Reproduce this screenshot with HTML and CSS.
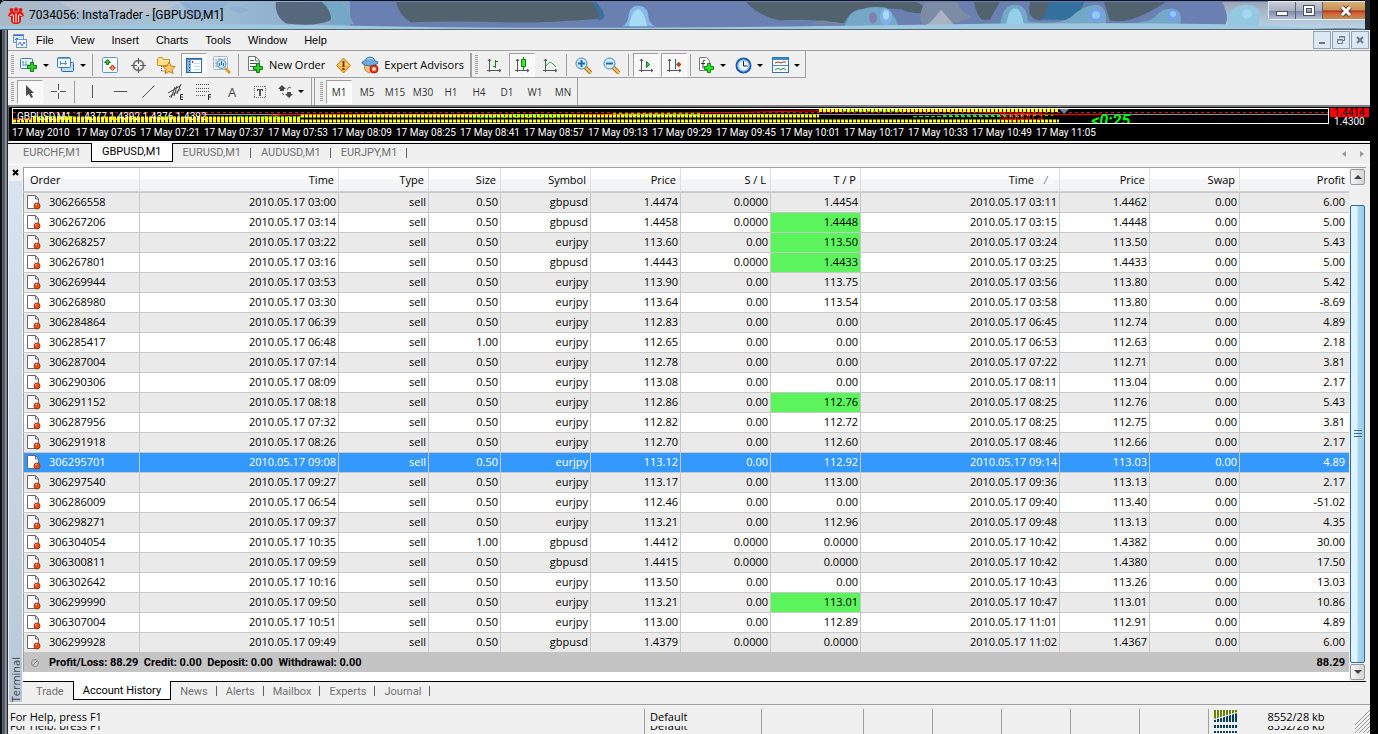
FILE: index.html
```html
<!DOCTYPE html>
<html lang="en">
<head>
    <meta charset="UTF-8">
    <meta name="viewport" content="width=device-width, initial-scale=1.0">
    <title>7034056: InstaTrader - [GBPUSD,M1]</title>
    <link rel="stylesheet" href="styles.css">
</head>
<body>

<div class="window">

    <!-- Title bar -->
    <header class="titlebar">
        <svg class="glass" viewBox="0 0 1365 30" preserveAspectRatio="none" aria-hidden="true">
            <defs>
                <linearGradient id="glass-left" x1="0" x2="1" y1="0" y2="0">
                    <stop offset="0" stop-color="#aab9c8"/><stop offset="0.55" stop-color="#a3c0d6"/><stop offset="1" stop-color="#7fa6c8"/>
                </linearGradient>
                <linearGradient id="glass-end" x1="0" x2="0" y1="0" y2="1">
                    <stop offset="0" stop-color="#9aa6ba"/><stop offset="1" stop-color="#bcd4e4"/>
                </linearGradient>
            </defs>
            <rect width="1365" height="30" fill="#6a80b0"/>
            <rect width="350" height="30" fill="url(#glass-left)"/>
            <path d="M60 1h120l-20 12-30 5-25-9-30 2z" fill="#b9c3d0"/>
            <path d="M228 7q12-3 22 3l-10 4zM180 1h50l-15 14-20 5z" fill="#8fb0d2"/>
            <path d="M276 1h46q14 11 8 20-14 7-44 3-12-9-10-23z" fill="#55687c"/>
            <path d="M322 1h20l12 24h-24q4-12-8-24z" fill="#74a8c6"/>
            <path d="M396 1h198q8 12 5 18-60 5-90 4-60-2-98 0-12-8-15-22z" fill="#53626f"/>
            <path d="M592 1h4q10 11 8 18l-6 2q3-8-6-20z" fill="#3a70a0"/>
            <path d="M746 1h170q12 5 6 12-14 0-20-4-22-2-44 0-10 4-14 15-40-6-64-3-20-4-34-20z" fill="#53626f"/>
            <path d="M812 25q4-5 12-4 14 4 24 2v2z" fill="#7488a0"/>
            <path d="M925 1h32q4 12 16 16l-20 8h-30q-6-8 2-24z" fill="#7c8ca4"/>
            <path d="M925 27q8-6 16-18 8 10 14 18z" fill="#a9b2c4"/>
            <path d="M845 27q4-17 16-18 10-4 24-2 8 4 14 20z" fill="#74a8c6"/>
            <ellipse cx="873" cy="18" rx="4" ry="6" fill="#8080b0"/>
            <ellipse cx="886" cy="17" rx="6" ry="9" fill="#86b0f0"/>
            <ellipse cx="886" cy="15" rx="3" ry="5" fill="#a8dcf0"/>
            <path d="M622 27q6-2 7-14 2-8 9-8 8 0 10 8 0 12 8 14z" fill="#86b8ea"/>
            <path d="M629 27q3-18 9-18t9 18z" fill="#a8dcf4"/>
            <path d="M974 1h26q-8 14-10 19h-8q-6-6-8-19z" fill="#53626f"/>
            <path d="M1030 1h54q-2 12-18 19h-30z" fill="#34709c"/>
            <path d="M1030 1h18q0 12-8 20-14-2-10-20zM1104 1h62q-20 14-36 19-12 3-20 1z" fill="#53626f"/>
            <path d="M1000 27q2-23 15-23 12 0 13 18 30 4 42-4 12-13 26-14 12 2 10 20 40 2 50-8 6-8 16-8 12 2 8 18z" fill="#72a8c8"/>
            <path d="M1006 28q2-20 9-20t9 20z" fill="#96d0e8"/>
            <circle cx="1096" cy="15" r="7" fill="#7c9ef0"/><circle cx="1096" cy="15" r="4" fill="#8acff0"/>
            <circle cx="1173" cy="15" r="6" fill="#7c9ef0"/><circle cx="1173" cy="14" r="3" fill="#8acff0"/>
            <path d="M1222 1h46v28h-46q10-8 0-28z" fill="url(#glass-end)"/>
            <path d="M1228 28q-3-24 19-24 20 2 12 24z" fill="#94c8e0"/>
            <circle cx="1247" cy="14" r="5" fill="#a4d8f0"/>
            <path d="M1259 1h106v28h-106z" fill="url(#glass-end)"/>
            <path d="M0 27q180-4 380 0t500-1 400 1 85-1v4h-1365z" fill="#a0c8e0"/>
        </svg>
        <svg class="app-logo" width="16" height="17" viewBox="0 0 16 17" aria-hidden="true">
            <path d="M1 6l3-2 4 1 4-1 3 2 1 3-3 1v5l-3 2H6l-3-2v-5L0 9z" fill="#e8180c"/>
            <path d="M8 6v10M5.500 8v7M10.500 8v7M2 8.500l3-1M14 8.500l-3-1" stroke="#fff" stroke-width="1" fill="none"/>
            <circle cx="8" cy="2.500" r="2" fill="#e8180c"/><circle cx="3.500" cy="3" r="2" fill="#e8180c"/><circle cx="12.500" cy="3" r="2" fill="#e8180c"/>
        </svg>
        <h1 class="caption">7034056: InstaTrader - [GBPUSD,M1]</h1>
        <div class="window-buttons">
            <button type="button" class="win-btn" aria-label="Minimize"><svg width="12" height="12" viewBox="0 0 12 12"><rect x="0.500" y="6.500" width="11" height="4" fill="#fff" stroke="#4a5260"/></svg></button>
            <button type="button" class="win-btn" aria-label="Maximize"><svg width="12" height="12" viewBox="0 0 12 12"><rect x="2" y="2" width="8" height="7" fill="none" stroke="#4a5260" stroke-width="4"/><rect x="2" y="2" width="8" height="7" fill="none" stroke="#fff" stroke-width="2"/></svg></button>
            <button type="button" class="win-btn win-close" aria-label="Close"><svg width="12" height="12" viewBox="0 0 12 12"><path d="M2 2l8 8M10 2l-8 8" stroke="#5a4040" stroke-width="5"/><path d="M2 2l8 8M10 2l-8 8" stroke="#fff" stroke-width="3"/></svg></button>
        </div>
    </header>

    <div class="client">

        <!-- Menu -->
        <nav class="menubar">
            <svg class="menu-icon" width="15" height="15" viewBox="0 0 15 15" aria-hidden="true">
                <rect x="1.500" y="1.500" width="10" height="8" fill="#dce8fa" stroke="#6c94dc"/><path d="M2 2.500h9" stroke="#3c6cd0"/>
                <rect x="4.500" y="6.500" width="10" height="8" fill="#fff" stroke="#6c94dc"/><path d="M6 12l2-3 2 4 2-4 1 2" stroke="#3c6cd0" fill="none"/>
                <path d="M3 7l2-2 1 1" stroke="#3c6cd0" fill="none"/>
            </svg>
            <button type="button" class="menu-item">File</button>
            <button type="button" class="menu-item">View</button>
            <button type="button" class="menu-item">Insert</button>
            <button type="button" class="menu-item">Charts</button>
            <button type="button" class="menu-item">Tools</button>
            <button type="button" class="menu-item">Window</button>
            <button type="button" class="menu-item">Help</button>
            <div class="mdi-buttons">
                <button type="button" class="mdi-btn" aria-label="Minimize chart"><svg width="10" height="10" viewBox="0 0 10 10"><path d="M2 8h6" stroke="#6a7a8c" stroke-width="2"/></svg></button>
                <button type="button" class="mdi-btn" aria-label="Restore chart"><svg width="10" height="10" viewBox="0 0 10 10"><path d="M1.500 4.500h5v4h-5zM3.500 3V1.500h5v4H7M1 5h6M3 2h6" stroke="#6a7a8c" fill="none"/></svg></button>
                <button type="button" class="mdi-btn" aria-label="Close chart"><svg width="10" height="10" viewBox="0 0 10 10"><path d="M2 2l6 6M8 2l-6 6" stroke="#6a7a8c" stroke-width="2"/></svg></button>
            </div>
        </nav>

        <!-- Standard toolbar -->
        <div class="toolbar toolbar-main">
            <i class="grip"></i>
            <button type="button" class="tool drop" aria-label="New chart"><svg width="18" height="16" viewBox="0 0 18 16"><rect x="0.500" y="1.500" width="12" height="10" rx="1" fill="#eaf4fc" stroke="#3c7cb4"/><path d="M3 4v5M2 5h2M3 8h6M6 4v5" stroke="#6c9cc4" fill="none"/><path d="M10.500 5.500h3v3h3v3h-3v3h-3v-3h-3v-3h3z" fill="#2cd42c" stroke="#0a7c0a"/></svg></button>
            <button type="button" class="tool drop" aria-label="Profiles"><svg width="18" height="16" viewBox="0 0 18 16"><rect x="4.500" y="5.500" width="12" height="9" rx="1" fill="#c4dcf0" stroke="#2c6cac"/><rect x="0.500" y="0.500" width="13" height="10" rx="1" fill="#eef6fc" stroke="#3c7cb4"/><path d="M1 1.500h12" stroke="#6cacdc"/><path d="M3.500 4v4M3 6.500h7M8.500 4v4" stroke="#5c8cb4" fill="none"/></svg></button>
            <i class="sep"></i>
            <button type="button" class="tool" aria-label="Market Watch"><svg width="16" height="16" viewBox="0 0 16 16"><rect x="0.500" y="0.500" width="15" height="15" rx="1" fill="#fafdff" stroke="#5c9cc4"/><path d="M5.500 2.500l3 3h-2v2h-2v-2h-2z" fill="#3cc43c" stroke="#0c7c1c"/><path d="M10.500 13.500l-3-3h2v-2h2v2h2z" fill="#fc9c6c" stroke="#d43c0c"/></svg></button>
            <button type="button" class="tool" aria-label="Data Window"><svg width="17" height="17" viewBox="0 0 17 17"><circle cx="8.500" cy="8.500" r="5" fill="none" stroke="#7c7c7c" stroke-width="2"/><path d="M8.500 1v6M8.500 10v6M1 8.500h6M10 8.500h6" stroke="#5c5c5c"/></svg></button>
            <button type="button" class="tool" aria-label="Navigator"><svg width="19" height="18" viewBox="0 0 19 18"><path d="M0.500 2.500l1-1h4l1 2h6v6h-12z" fill="#fce08c" stroke="#c89430"/><path d="M4.500 10v5h4" stroke="#444" stroke-dasharray="1 1" fill="none"/><path d="M12 6l2 4 4 .500-3 3 1 4-4-2-4 2 1-4-3-3 4-.500z" fill="#fccc5c" stroke="#c8701c"/></svg></button>
            <button type="button" class="tool active" aria-label="Terminal"><svg width="16" height="15" viewBox="0 0 16 15"><rect x="0.500" y="0.500" width="15" height="14" fill="#fcfeff" stroke="#2c64a4"/><path d="M1 1.500h14" stroke="#4c8ccc"/><path d="M1 2h4v12H1z" fill="#7cb4e8"/><path d="M3.500 3v10" stroke="#14406c" stroke-dasharray="1 2"/><path d="M6 4h1" stroke="#d00" stroke-width="2"/><path d="M8 5.500h6M8 8.500h6M8 11.500h6" stroke="#c4d8ec"/></svg></button>
            <button type="button" class="tool" aria-label="Strategy Tester"><svg width="18" height="18" viewBox="0 0 18 18"><rect x="0.500" y="0.500" width="14" height="13" rx="1" fill="#f4f8fc" stroke="#a4b8c8"/><path d="M3 3v9M6 2v5M12 2v5" stroke="#6c8ca4" stroke-dasharray="2 1"/><circle cx="8.500" cy="8" r="4.500" fill="#bce0f8" stroke="#5c8cb4"/><path d="M6.500 10V7M8.500 9V5M10.500 10V7" stroke="#2c6c9c"/><path d="M12 12l5 5" stroke="#d89c3c" stroke-width="3"/></svg></button>
            <i class="sep"></i>
            <button type="button" class="tool labelled new-order"><svg width="17" height="18" viewBox="0 0 17 18"><path d="M1.500 0.500h7l4 4v10h-11z" fill="#fff" stroke="#6c7c74"/><path d="M8.500 1v4h4" stroke="#6c7c74" fill="none"/><path d="M3 4.500h4M3 7.500h7M3 10.500h5" stroke="#3c5c4c"/><path d="M9.500 7.500h3v3h3v3h-3v3h-3v-3h-3v-3h3z" fill="#2cd42c" stroke="#0a7c0a"/></svg><span>New Order</span></button>
            <button type="button" class="tool" aria-label="MetaEditor"><svg width="17" height="17" viewBox="0 0 17 17"><path d="M8.500 1l7 7.500-7 7.500-7-7.500z" fill="#f8b444" stroke="#c87c1c" stroke-linejoin="round"/><path d="M8.500 3l5 5.500h-10z" fill="#fcd88c"/><path d="M8.500 4v6M8.500 11v2" stroke="#6c3c0c" stroke-width="2"/></svg></button>
            <button type="button" class="tool labelled"><svg width="18" height="18" viewBox="0 0 18 18"><path d="M3 8h11l-1 6-5 3-4-3z" fill="#f4c07c" stroke="#c08440"/><path d="M1 7q0-2 3-2 1-4 5-4t5 4q3 0 3 2-3 3-8 3T1 7z" fill="#6cacdc" stroke="#3474ac"/><path d="M6 3q3-1 6 0" stroke="#c4e4f8" fill="none"/><circle cx="13" cy="13" r="4" fill="#e83c1c" stroke="#a8200c"/><rect x="11.500" y="11.500" width="3" height="3" fill="#fff"/></svg><span>Expert Advisors</span></button>
            <i class="sep sep-bar"></i>
            <i class="grip"></i>
            <button type="button" class="tool" aria-label="Bar chart"><svg width="16" height="16" viewBox="0 0 16 16"><path d="M3.500 15V2M1 13.500h14M2 4l1.500-2L5 4M13 12l2 1.500-2 1.500" stroke="#555" fill="none"/><path d="M9.500 3v8M9 4.500h3M7 9.500h2" stroke="#1c7c1c" fill="none"/></svg></button>
            <button type="button" class="tool active" aria-label="Candlesticks"><svg width="16" height="16" viewBox="0 0 16 16"><path d="M3.500 15V2M1 13.500h14M2 4l1.500-2L5 4M13 12l2 1.500-2 1.500" stroke="#555" fill="none"/><path d="M9.500 0v13" stroke="#0c7c0c"/><rect x="7.500" y="2.500" width="4" height="7" fill="#3ce43c" stroke="#0c8c0c"/></svg></button>
            <button type="button" class="tool" aria-label="Line chart"><svg width="16" height="16" viewBox="0 0 16 16"><path d="M3.500 15V2M1 13.500h14M2 4l1.500-2L5 4M13 12l2 1.500-2 1.500" stroke="#555" fill="none"/><path d="M4 9q4-6 7-2l3 3" stroke="#2cac3c" fill="none"/></svg></button>
            <i class="sep"></i>
            <button type="button" class="tool" aria-label="Zoom in"><svg width="17" height="17" viewBox="0 0 17 17"><path d="M10 10l6 6" stroke="#a8701c" stroke-width="4"/><path d="M10 10l6 6" stroke="#f8c45c" stroke-width="2"/><circle cx="6.500" cy="6.500" r="5.500" fill="#d4ecfc" stroke="#3484c4"/><path d="M3 6.500h7M6.500 3v7" stroke="#1c6cb4" stroke-width="2"/></svg></button>
            <button type="button" class="tool" aria-label="Zoom out"><svg width="17" height="17" viewBox="0 0 17 17"><path d="M10 10l6 6" stroke="#a8701c" stroke-width="4"/><path d="M10 10l6 6" stroke="#f8c45c" stroke-width="2"/><circle cx="6.500" cy="6.500" r="5.500" fill="#d4ecfc" stroke="#3484c4"/><path d="M3 6.500h7" stroke="#1c6cb4" stroke-width="2"/></svg></button>
            <i class="sep"></i>
            <button type="button" class="tool active" aria-label="Auto scroll"><svg width="16" height="16" viewBox="0 0 16 16"><path d="M3.500 15V2M1 13.500h14M2 4l1.500-2L5 4M13 12l2 1.500-2 1.500" stroke="#555" fill="none"/><path d="M8.500 4.500l3 3-3 3z" fill="#3cd43c" stroke="#0c7c1c"/></svg></button>
            <button type="button" class="tool active" aria-label="Chart shift"><svg width="16" height="16" viewBox="0 0 16 16"><path d="M3.500 15V2M1 13.500h14M2 4l1.500-2L5 4M13 12l2 1.500-2 1.500" stroke="#555" fill="none"/><path d="M9.500 2v10" stroke="#1c5c9c"/><path d="M15 7.500h-4M13.500 5.500l-2 2 2 2" stroke="#c43c0c" fill="none" stroke-width="2"/></svg></button>
            <i class="sep"></i>
            <button type="button" class="tool drop" aria-label="Indicators"><svg width="17" height="18" viewBox="0 0 17 18"><path d="M1.500 1.500h7l3 3v10h-10z" fill="#fff" stroke="#7c7c7c"/><path d="M7 4.500q-2-1-2 2v6M3 7.500h4" stroke="#333" fill="none"/><path d="M9.500 7.500h3v3h3v3h-3v3h-3v-3h-3v-3h3z" fill="#2ce42c" stroke="#0a8c0a"/></svg></button>
            <button type="button" class="tool drop" aria-label="Periods"><svg width="17" height="17" viewBox="0 0 17 17"><circle cx="8.500" cy="8.500" r="7" fill="#e8f2fc" stroke="#1c5cac" stroke-width="2"/><circle cx="8.500" cy="8.500" r="5.500" fill="none" stroke="#6cacec"/><path d="M8.500 4v5h4" stroke="#222" fill="none"/></svg></button>
            <button type="button" class="tool drop" aria-label="Templates"><svg width="17" height="16" viewBox="0 0 17 16"><rect x="0.500" y="0.500" width="16" height="15" fill="#fff" stroke="#2c74b4"/><path d="M1 2h15" stroke="#3c8cd4" stroke-width="2"/><path d="M1 8.500h15" stroke="#4c8cc4"/><path d="M3 6l3-1 3 1 2-1h3" stroke="#943c1c" fill="none"/><path d="M3 13l3-2 3 2 2-2 3 2" stroke="#1c9c2c" fill="none"/></svg></button>
        </div>

        <!-- Line studies and timeframes -->
        <div class="toolbar-row">
            <div class="toolbar">
                <i class="grip"></i>
                <button type="button" class="tool active" aria-label="Cursor"><svg width="10" height="15" viewBox="0 0 10 15"><path d="M1 1v11l3-2 2 4 2-1-2-4h3z" fill="#4c4c4c"/></svg></button>
                <button type="button" class="tool" aria-label="Crosshair"><svg width="15" height="15" viewBox="0 0 15 15"><path d="M7.500 0v6M7.500 9v6M0 7.500h6M9 7.500h6" stroke="#555"/></svg></button>
                <i class="sep"></i>
                <button type="button" class="tool" aria-label="Vertical line"><svg width="13" height="13" viewBox="0 0 13 13"><path d="M6.500 0v13" stroke="#555"/></svg></button>
                <button type="button" class="tool" aria-label="Horizontal line"><svg width="13" height="13" viewBox="0 0 13 13"><path d="M0 6.500h13" stroke="#555"/></svg></button>
                <button type="button" class="tool" aria-label="Trendline"><svg width="13" height="13" viewBox="0 0 13 13"><path d="M0.500 12.500l12-12" stroke="#555"/></svg></button>
                <button type="button" class="tool" aria-label="Equidistant channel"><svg width="16" height="16" viewBox="0 0 16 16"><path d="M0 9l12-7M1 13l12-8M3 14l4-11M6 12l3-10M9 10l4-10" stroke="#444" fill="none"/><path d="M15 10.500h-2.500v5H15M12 13h3" stroke="#333" fill="none"/></svg></button>
                <button type="button" class="tool" aria-label="Fibonacci"><svg width="16" height="16" viewBox="0 0 16 16"><path d="M0 0.500h13M0 4.500h13M0 7.500h13M0 11.500h9" stroke="#555" stroke-dasharray="1 1"/><path d="M15 10.500h-2.500V16M12 13h3" stroke="#333" fill="none"/></svg></button>
                <button type="button" class="tool text-tool" aria-label="Text">A</button>
                <button type="button" class="tool" aria-label="Text label"><svg width="14" height="14" viewBox="0 0 14 14"><path d="M1 1.500h12M1 12.500h12M1.500 1v12M12.500 1v12" stroke="#777" stroke-dasharray="1 1"/><path d="M4 4.500h6M4.500 4v2M9.500 4v2M6 10.500h2" stroke="#444"/><path d="M7 4v7" stroke="#555" stroke-width="2"/></svg></button>
                <button type="button" class="tool drop" aria-label="Arrows"><svg width="15" height="13" viewBox="0 0 15 13"><path d="M4 0l4 4H6v2H2V4H0zM11 13L7 9h2V7h4v2h2z" fill="#4c4c4c"/><path d="M4 8l2 2M9 5l2-3 2 1" stroke="#666" fill="none"/></svg></button>
            </div>
            <div class="toolbar">
                <i class="grip"></i>
                <button type="button" class="tool period active">M1</button>
                <button type="button" class="tool period">M5</button>
                <button type="button" class="tool period">M15</button>
                <button type="button" class="tool period">M30</button>
                <button type="button" class="tool period">H1</button>
                <button type="button" class="tool period">H4</button>
                <button type="button" class="tool period">D1</button>
                <button type="button" class="tool period">W1</button>
                <button type="button" class="tool period">MN</button>
            </div>
        </div>

        <!-- Chart -->
        <section class="chart">
            <div class="plot-row">
                <div class="plot">
                    <svg class="plot-lines" viewBox="0 0 1315 14" preserveAspectRatio="none" aria-hidden="true">
                        <path d="M190 5.500H1315" stroke="#8090a8"/>
                        <path d="M0 3.500H1315" stroke="#f00" stroke-dasharray="3 3"/>
                        <path d="M20 9.500h250M500 5.500h60M610 6.500h80M900 7.500h110M20 7.500h40" stroke="#0f0" stroke-dasharray="4 2"/>
                        <path d="M0 9.500h240l30-4h60l30 1h100l60 1 100-3 100-1 100-2h100l60 2 60 2h50" stroke="#f00" fill="none"/>
                        <path d="M0 12h1046M20 9h268M288 7h518M806 1.500h240" stroke="#ff0" stroke-width="3" stroke-dasharray="3 1"/>
                        <path d="M220 7.500h68M460 8.500h90M600 4.500h90M830 2.500h60M930 6.500h110" stroke="#0f0" stroke-dasharray="3 3"/>
                        <path d="M1046 0h10l-5 5z" fill="#708090"/>
                    </svg>
                    <span class="quote">GBPUSD,M1&nbsp; 1.4377 1.4392 1.4376 1.4392</span>
                    <span class="support">Support 3</span>
                    <span class="countdown">&lt;0:25</span>
                </div>
                <div class="price-scale">
                    <span class="price-now">1.4414</span>
                    <span class="price-tick">1.4300</span>
                </div>
            </div>
            <div class="time-scale">
                <span>17 May 2010</span><span>17 May 07:05</span><span>17 May 07:21</span><span>17 May 07:37</span><span>17 May 07:53</span><span>17 May 08:09</span><span>17 May 08:25</span><span>17 May 08:41</span><span>17 May 08:57</span><span>17 May 09:13</span><span>17 May 09:29</span><span>17 May 09:45</span><span>17 May 10:01</span><span>17 May 10:17</span><span>17 May 10:33</span><span>17 May 10:49</span><span>17 May 11:05</span>
            </div>
        </section>

        <!-- Chart tabs -->
        <div class="tabs chart-tabs">
            <button type="button" class="tab">EURCHF,M1</button>
            <button type="button" class="tab current">GBPUSD,M1</button>
            <button type="button" class="tab">EURUSD,M1</button>
            <button type="button" class="tab">AUDUSD,M1</button>
            <button type="button" class="tab">EURJPY,M1</button>
            <div class="tab-arrows">
                <button type="button" aria-label="Scroll tabs left"><svg width="4" height="6" viewBox="0 0 4 6"><path d="M4 0v6L0 3z" fill="#999"/></svg></button>
                <button type="button" aria-label="Scroll tabs right"><svg width="4" height="6" viewBox="0 0 4 6"><path d="M0 0v6l4-3z" fill="#999"/></svg></button>
            </div>
        </div>

        <!-- Terminal -->
        <section class="terminal">
            <div class="terminal-side">
                <button type="button" class="panel-close" aria-label="Close terminal"><svg width="7" height="7" viewBox="0 0 7 7"><path d="M1 1l5 5M6 1L1 6" stroke="#000" stroke-width="2"/></svg></button>
                <div class="panel-grip"><span>Terminal</span></div>
            </div>
            <div class="terminal-main">
                <div class="history">
                    <table>
                        <colgroup>
                            <col class="c-order"><col class="c-time"><col class="c-price"><col class="c-size">
                            <col class="c-price"><col class="c-price"><col class="c-price"><col class="c-price">
                            <col class="c-time"><col class="c-price"><col class="c-price"><col>
                        </colgroup>
                        <thead>
                            <tr>
                                <th>Order</th><th>Time</th><th>Type</th><th>Size</th><th>Symbol</th><th>Price</th>
                                <th>S / L</th><th>T / P</th>
                                <th>Time<svg class="sort" width="12" height="8" viewBox="0 0 12 8" aria-hidden="true"><path d="M5 0L1 8" stroke="#888"/><path d="M6 0l4 7.500H2" stroke="#fff" fill="none"/></svg></th>
                                <th>Price</th><th>Swap</th><th>Profit</th>
                            </tr>
                        </thead>
                        <tbody id="orders"></tbody>
                        <tfoot>
                            <tr>
                                <td colspan="11"><svg class="order-icon" width="16" height="16" viewBox="0 0 16 16" aria-hidden="true"><circle cx="8" cy="8" r="3.500" fill="#ccc" stroke="#888"/><path d="M6 10l4-4" stroke="#888"/></svg>Profit/Loss: 88.29&nbsp; Credit: 0.00&nbsp; Deposit: 0.00&nbsp; Withdrawal: 0.00</td>
                                <td>88.29</td>
                            </tr>
                        </tfoot>
                    </table>
                    <div class="scrollbar">
                        <button type="button" class="scroll-btn" aria-label="Scroll up"><svg width="8" height="4" viewBox="0 0 8 4"><path d="M0 4l4-4 4 4z" fill="#444"/></svg></button>
                        <div class="thumb"><svg width="8" height="8" viewBox="0 0 8 8"><path d="M0 0.500h8M0 3.500h8M0 6.500h8" stroke="#3c6c94"/></svg></div>
                        <button type="button" class="scroll-btn" aria-label="Scroll down"><svg width="8" height="4" viewBox="0 0 8 4"><path d="M0 0l4 4 4-4z" fill="#444"/></svg></button>
                    </div>
                </div>
                <div class="tabs terminal-tabs">
                    <button type="button" class="tab">Trade</button>
                    <button type="button" class="tab current">Account History</button>
                    <button type="button" class="tab">News</button>
                    <button type="button" class="tab">Alerts</button>
                    <button type="button" class="tab">Mailbox</button>
                    <button type="button" class="tab">Experts</button>
                    <button type="button" class="tab">Journal</button>
                </div>
            </div>
        </section>

        <!-- Status bar -->
        <footer class="statusbar">
            <div class="status-help echo" data-text="For Help, press F1">For Help, press F1</div>
            <div class="status-profile echo" data-text="Default">Default</div>
            <div class="status-cell s-date"></div>
            <div class="status-cell"></div>
            <div class="status-cell"></div>
            <div class="status-cell"></div>
            <div class="status-cell"></div>
            <div class="status-cell"></div>
            <div class="status-net">
                <svg width="23" height="23" viewBox="0 0 23 23" aria-hidden="true">
                    <path d="M0 9V0h23v3z" fill="#6c8000"/>
                    <path d="M0 12V10l23-7v9zM0 15h23v3H0zM0 21h23v2H0z" fill="#003c5c"/>
                    <path d="M2.500 0v23M5.500 0v23M8.500 0v23M11.500 0v23M14.500 0v23M17.500 0v23M20.500 0v23M0 9.500l23-7" stroke="#f0f0f0"/>
                </svg>
                <span class="echo" data-text="8552/28 kb">8552/28 kb</span>
                <svg class="size-grip" width="15" height="23" viewBox="0 0 15 23" aria-hidden="true"><path d="M0 15L15 0M0 19L15 4M0 23L15 8M4 23l11-11M8 23l7-7M12 23l3-3" stroke="#999"/></svg>
            </div>
        </footer>

    </div>
</div>

<script>
    // order, open time, size, symbol, open price, S/L, T/P, close time, close price, profit
    const orders = [
        ['306266558', '03:00', '0.50', 'gbpusd', '1.4474', '0.0000', '1.4454', '03:11', '1.4462', '6.00'],
        ['306267206', '03:14', '0.50', 'gbpusd', '1.4458', '0.0000', '1.4448', '03:15', '1.4448', '5.00'],
        ['306268257', '03:22', '0.50', 'eurjpy', '113.60', '0.00', '113.50', '03:24', '113.50', '5.43'],
        ['306267801', '03:16', '0.50', 'gbpusd', '1.4443', '0.0000', '1.4433', '03:25', '1.4433', '5.00'],
        ['306269944', '03:53', '0.50', 'eurjpy', '113.90', '0.00', '113.75', '03:56', '113.80', '5.42'],
        ['306268980', '03:30', '0.50', 'eurjpy', '113.64', '0.00', '113.54', '03:58', '113.80', '-8.69'],
        ['306284864', '06:39', '0.50', 'eurjpy', '112.83', '0.00', '0.00', '06:45', '112.74', '4.89'],
        ['306285417', '06:48', '1.00', 'eurjpy', '112.65', '0.00', '0.00', '06:53', '112.63', '2.18'],
        ['306287004', '07:14', '0.50', 'eurjpy', '112.78', '0.00', '0.00', '07:22', '112.71', '3.81'],
        ['306290306', '08:09', '0.50', 'eurjpy', '113.08', '0.00', '0.00', '08:11', '113.04', '2.17'],
        ['306291152', '08:18', '0.50', 'eurjpy', '112.86', '0.00', '112.76', '08:25', '112.76', '5.43'],
        ['306287956', '07:32', '0.50', 'eurjpy', '112.82', '0.00', '112.72', '08:25', '112.75', '3.81'],
        ['306291918', '08:26', '0.50', 'eurjpy', '112.70', '0.00', '112.60', '08:46', '112.66', '2.17'],
        ['306295701', '09:08', '0.50', 'eurjpy', '113.12', '0.00', '112.92', '09:14', '113.03', '4.89'],
        ['306297540', '09:27', '0.50', 'eurjpy', '113.17', '0.00', '113.00', '09:36', '113.13', '2.17'],
        ['306286009', '06:54', '0.50', 'eurjpy', '112.46', '0.00', '0.00', '09:40', '113.40', '-51.02'],
        ['306298271', '09:37', '0.50', 'eurjpy', '113.21', '0.00', '112.96', '09:48', '113.13', '4.35'],
        ['306304054', '10:35', '1.00', 'gbpusd', '1.4412', '0.0000', '0.0000', '10:42', '1.4382', '30.00'],
        ['306300811', '09:59', '0.50', 'gbpusd', '1.4415', '0.0000', '0.0000', '10:42', '1.4380', '17.50'],
        ['306302642', '10:16', '0.50', 'eurjpy', '113.50', '0.00', '0.00', '10:43', '113.26', '13.03'],
        ['306299990', '09:50', '0.50', 'eurjpy', '113.21', '0.00', '113.01', '10:47', '113.01', '10.86'],
        ['306307004', '10:51', '0.50', 'eurjpy', '113.00', '0.00', '112.89', '11:01', '112.91', '4.89'],
        ['306299928', '09:49', '0.50', 'gbpusd', '1.4379', '0.0000', '0.0000', '11:02', '1.4367', '6.00']
    ];
    const selected = '306295701';
    const day = '2010.05.17 ';
    const icon = '<svg class="order-icon" width="16" height="16" viewBox="0 0 16 16" aria-hidden="true">' +
        '<path d="M0.500 1.500h8l3 3v10h-11z" fill="#fff" stroke="#666"/><path d="M8.500 2v3h3" fill="none" stroke="#666"/>' +
        '<circle cx="10" cy="12" r="3" fill="#e8501c" stroke="#a83008"/><path d="M8 11l2-1" stroke="#fcb890"/></svg>';

    document.getElementById('orders').innerHTML = orders.map(function (o) {
        // T/P is highlighted when the order was closed by it
        const hit = o[6] === o[8] ? ' class="hit"' : '';
        return '<tr' + (o[0] === selected ? ' class="selected"' : '') + '>' +
            '<td>' + icon + o[0] + '</td><td>' + day + o[1] + '</td><td>sell</td><td>' + o[2] + '</td><td>' + o[3] + '</td>' +
            '<td>' + o[4] + '</td><td>' + o[5] + '</td><td' + hit + '>' + o[6] + '</td>' +
            '<td>' + day + o[7] + '</td><td>' + o[8] + '</td><td>0.00</td><td>' + o[9] + '</td></tr>';
    }).join('');
</script>

</body>
</html>
```

FILE: styles.css
```css
* {
    box-sizing: border-box;
}

body {
    margin: 0;
    background: #000;
    font-family: "Open Sans", "Noto Sans", sans-serif;
    font-size: 11px;
    line-height: 14px;
    color: #000;
}

button {
    margin: 0;
    padding: 0;
    border: 0;
    background: none;
    font: inherit;
    color: inherit;
}

svg {
    display: block;
    flex: none;
}

.window {
    display: flex;
    flex-direction: column;
    min-height: 100vh;
    margin-right: 8px;
    padding-left: 8px;
    background: linear-gradient(90deg, #111 0, #111 2px, #5c6674 2px, #4a5464 5px, #d8dce4 6px, #22262c 7px, #22262c 8px);
}

/* Title bar */
.titlebar {
    position: relative;
    display: flex;
    align-items: center;
    height: 30px;
    margin: 0 5px 0 -8px;
    padding-left: 8px;
    border-top: 1px solid #101020;
    border-bottom: 1px solid #556878;
    border-top-left-radius: 6px;
    overflow: hidden;
}

.glass {
    position: absolute;
    top: 0;
    left: 0;
    width: 100%;
    height: 100%;
}

.app-logo {
    position: relative;
}

.caption {
    position: relative;
    flex: 1;
    margin: 0;
    padding-left: 5px;
    font-family: Roboto, "Open Sans", sans-serif;
    font-size: 12px;
    font-weight: normal;
}

.window-buttons {
    position: relative;
    display: flex;
    align-self: flex-start;
    border: 1px solid #e4ecf4;
    border-right: 0;
    border-radius: 0 0 0 4px;
}

.win-btn {
    display: flex;
    align-items: center;
    justify-content: center;
    width: 27px;
    height: 17px;
    border-right: 1px solid #5c6470;
    background: linear-gradient(#c8ccd4, #a8b0c0 50%, #8088b0 55%, #b4c0d0);
}

.win-close {
    width: 42px;
    padding-left: 4px;
    border-right: 0;
    background: linear-gradient(#d8b070, #c89058 48%, #a03020 52%, #d86030 65%, #b89058);
}

/* Menu */
.client {
    display: flex;
    flex: 1;
    flex-direction: column;
    background: #f0f0f0;
}

.menubar {
    display: flex;
    align-items: center;
    height: 21px;
    padding-left: 4px;
    border-bottom: 1px solid #a0a0a0;
}

.menu-icon {
    margin-right: 1px;
}

.menu-item {
    padding: 0 9px 0 8px;
    font-family: "Liberation Sans", Arial, sans-serif;
}

.mdi-buttons {
    display: flex;
    gap: 1px;
    margin-left: auto;
    margin-right: 1px;
}

.mdi-btn {
    display: flex;
    align-items: center;
    justify-content: center;
    width: 18px;
    height: 18px;
    border: 1px solid #90a4b8;
    background: #dce8f4;
}

/* Toolbars */
.toolbar-row {
    display: flex;
}

.toolbar {
    display: flex;
    align-self: flex-start;
    align-items: center;
    height: 27px;
    padding-left: 3px;
    border-right: 1px solid #a0a0a0;
    border-bottom: 1px solid #a0a0a0;
}

.toolbar-main {
    padding-top: 2px;
}

.toolbar-row .toolbar {
    border-bottom: 0;
}

.toolbar-row .toolbar + .toolbar {
    margin-left: 2px;
    padding-left: 5px;
    border-left: 1px solid #a0a0a0;
}

.grip {
    width: 3px;
    height: 20px;
    margin-right: 2px;
    background: repeating-linear-gradient(#a0a0a0 0, #a0a0a0 1px, #f0f0f0 1px, #f0f0f0 2px);
}

.sep {
    width: 1px;
    height: 22px;
    margin: 0 3px 0 2px;
    background: #a0a0a0;
}

.sep-bar {
    width: 2px;
    height: 24px;
}

.tool {
    display: flex;
    align-items: center;
    justify-content: center;
    width: 28px;
    height: 24px;
}

.tool.active {
    width: 26px;
    margin: 0 1px;
    border: 1px solid #fff;
    border-top-color: #a0a0a0;
    border-left-color: #a0a0a0;
    background: #f8f8f8;
}

.drop {
    justify-content: flex-start;
    gap: 5px;
    width: 37px;
    padding-left: 4px;
}

.drop::after {
    content: "";
    border: 3px solid transparent;
    border-top-color: #000;
    border-bottom: 0;
}

.labelled {
    gap: 5px;
    width: auto;
    padding: 0 4px;
    white-space: nowrap;
}

.new-order {
    padding: 0 4px 0 5px;
}

.text-tool {
    font-size: 13px;
    color: #444;
}

.period {
    font-size: 10px;
    color: #333;
}

/* Chart */
.chart {
    padding: 1px 1px 0 3px;
    border-top: 2px solid #808080;
    border-left: 1px solid #606060;
    border-bottom: 1px solid #fff;
    background: #000;
    color: #fff;
    font-family: Roboto, "Open Sans", sans-serif;
    font-size: 10px;
}

.plot-row {
    display: flex;
}

.plot {
    position: relative;
    flex: 1;
    height: 16px;
    border: 1px solid #fff;
    overflow: hidden;
}

.plot-lines {
    width: 100%;
    height: 14px;
}

.quote,
.support,
.countdown {
    position: absolute;
    top: 2px;
    left: 4px;
    line-height: 12px;
}

.support {
    left: 75%;
    color: #f00;
}

.countdown {
    top: 6px;
    left: 82%;
    font-size: 16px;
    font-weight: bold;
    font-style: italic;
    color: #0f0;
}

.price-scale {
    display: flex;
    flex-direction: column;
    width: 40px;
    height: 16px;
    padding-left: 1px;
    line-height: 9px;
}

.price-now {
    padding-left: 4px;
    background: #f00;
    color: #000;
}

.price-tick {
    padding-left: 4px;
}

.time-scale {
    display: flex;
    height: 17px;
    overflow: hidden;
}

.time-scale span {
    flex: none;
    width: 64px;
    line-height: 18px;
    white-space: nowrap;
}

/* Tabs */
.tabs {
    display: flex;
    align-items: flex-start;
    border-top: 1px solid #000;
    color: #707070;
    font-family: Roboto, "Open Sans", sans-serif;
}

.tab {
    position: relative;
    height: 18px;
    padding: 0 10px;
}

.tab + .tab::after {
    content: "";
    position: absolute;
    top: 4px;
    right: 0;
    width: 1px;
    height: 10px;
    background: #606060;
}

.tab.current {
    margin-top: -1px;
    height: 19px;
    border: 1px solid #000;
    border-top: 0;
    background: #fff;
    color: #000;
}

.tab.current::after {
    display: none;
}

.chart-tabs {
    height: 22px;
    margin-top: 1px;
    padding-left: 5px;
    border-bottom: 1px solid #fff;
}

.tab-arrows {
    display: flex;
    gap: 14px;
    align-self: center;
    margin: 0 6px 0 auto;
}

/* Terminal */
.terminal {
    display: flex;
    padding: 2px 4px 2px 1px;
    border-bottom: 1px solid #a0a0a0;
}

.terminal-side {
    display: flex;
    flex-direction: column;
    width: 13px;
    margin-right: 1px;
}

.panel-close {
    display: flex;
    justify-content: center;
    height: 14px;
    padding: 2px 0;
}

.panel-grip {
    display: flex;
    flex: 1;
    align-items: flex-end;
    background: linear-gradient(#d8e4f0, #b8c8d8);
}

.panel-grip span {
    writing-mode: vertical-rl;
    transform: rotate(180deg);
    line-height: 13px;
    color: #444;
}

.terminal-main {
    flex: 1;
    min-width: 0;
}

.history {
    display: flex;
    height: 514px;
    border-top: 1px solid #a0a0a0;
    background: #fff;
}

table {
    flex: 1;
    align-self: flex-start;
    width: 100%;
    table-layout: fixed;
    border-collapse: separate;
    border-spacing: 0;
}

.c-order {
    width: 117px;
}

.c-time {
    width: 199px;
}

.c-price {
    width: 90px;
}

.c-size {
    width: 72px;
}

th,
td {
    height: 20px;
    padding: 0 2px 1px 3px;
    border-top: 1px solid #c8c8c8;
    border-right: 1px solid #c8c8c8;
    line-height: 16px;
    text-align: right;
    white-space: nowrap;
}

th {
    height: 24px;
    padding: 0 4px;
    border-top: 0;
    border-right-color: #e0e0e0;
    border-bottom: 1px solid #d0d0d0;
    background: linear-gradient(#fff 45%, #f4f5f7 50%, #f1f2f4);
    font-weight: normal;
}

th:first-child,
td:first-child {
    border-left: 1px solid #a0a0a0;
    text-align: left;
}

th:first-child {
    padding-left: 6px;
}

th:last-child,
td:last-child {
    padding-right: 4px;
    border-right: 0;
}

tbody tr:nth-child(odd) {
    background: #eaeaea;
}

.order-icon {
    display: inline-block;
    margin-right: 6px;
    vertical-align: top;
}

.sort {
    display: inline-block;
    margin-left: 9px;
}

.hit {
    background: #5cf45c;
}

tbody tr.selected {
    background: #3399ff;
    color: #fff;
}

tfoot td {
    padding-bottom: 0;
    border-top-color: #c4c4c4;
    border-right: 0;
    background: #c4c4c4;
    font-family: Roboto, "Open Sans", sans-serif;
    font-weight: bold;
}

.scrollbar {
    display: flex;
    flex-direction: column;
    width: 17px;
    padding: 1px;
    background: #f0f0f0;
}

.scroll-btn {
    display: flex;
    align-items: center;
    justify-content: center;
    height: 16px;
    border: 1px solid #989898;
    border-radius: 2px;
    background: linear-gradient(90deg, #f4f4f4, #d4d4d4);
}

.thumb {
    display: flex;
    flex: 1;
    align-items: center;
    justify-content: center;
    margin: 20px 0 1px;
    border: 1px solid #2c6c9c;
    border-radius: 2px;
    background: linear-gradient(90deg, #e0f2fc 45%, #a8d4f0 55%, #9ccce8);
}

.terminal-tabs {
    height: 21px;
    padding-left: 4px;
}

.terminal-tabs .tab {
    padding: 1px 9px 0;
}

/* Status bar */
.statusbar {
    display: flex;
    flex: 1;
    align-items: flex-start;
    min-height: 28px;
    margin-top: 1px;
    padding: 3px 0 0 2px;
}

.statusbar > div {
    height: 25px;
    padding-top: 1px;
}

.status-help {
    flex: 1;
}

.statusbar > div + div {
    width: 69px;
    border-left: 1px solid #a0a0a0;
}

.statusbar > div.status-profile {
    width: 117px;
    padding-left: 5px;
}

.statusbar > div.s-date {
    width: 102px;
}

.statusbar > div.status-net {
    display: flex;
    justify-content: space-between;
    width: 162px;
    padding-left: 5px;
}

/* sliver of a repeated line under the status text */
.echo::after {
    content: attr(data-text);
    display: block;
    height: 4px;
    margin-top: 2px;
    line-height: 0;
    overflow: hidden;
}
```
